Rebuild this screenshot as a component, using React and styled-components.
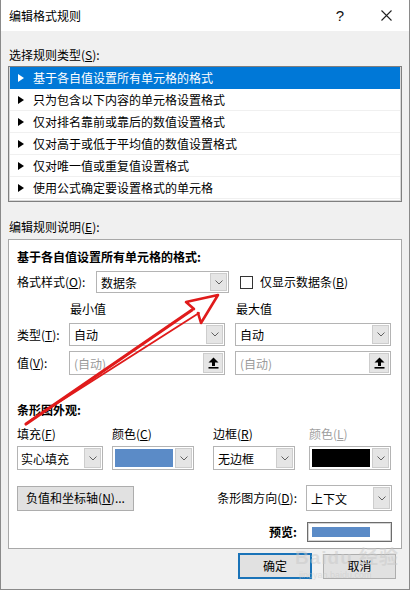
import React from 'react'
import styled, { createGlobalStyle } from 'styled-components'

const GlobalStyle = createGlobalStyle`
  html, body { margin: 0; padding: 0; background: #fff; }
  body {
    font-family: "Noto Sans CJK SC", "Noto Sans", sans-serif;
    font-size: 12px;
    color: #000;
  }
  * { box-sizing: border-box; }
`

const Window = styled.div`
  position: relative;
  width: 410px;
  height: 590px;
  background: #f0f0f0;
  border: 1px solid #8a8a8a;
  border-top: none;
  display: flex;
  flex-direction: column;
  overflow: hidden;
`

const TitleBar = styled.div`
  height: 31px;
  flex-shrink: 0;
  background: #fff;
  display: flex;
  align-items: center;
  padding-left: 8px;
  line-height: 16px;
`

const Title = styled.div`
  flex: 1;
`

const TitleBtn = styled.div`
  width: ${p => p.$w}px;
  height: 31px;
  display: flex;
  align-items: center;
  justify-content: center;
  font-size: 15px;
  color: #111;
  font-family: "Liberation Sans", sans-serif;
`

const Body = styled.div`
  padding: 0 7px;
  display: flex;
  flex-direction: column;
`

const SectionLabel = styled.div`
  height: 16px;
  line-height: 16px;
  margin-top: ${p => p.$mt}px;
  padding-left: 1px;
`

const U = styled.span`
  text-decoration: underline;
  text-underline-offset: 1px;
`

const RuleList = styled.div`
  margin-top: 3px;
  height: 136px;
  background: #fff;
  border: 1px solid #7f7f7f;
  box-shadow: inset 0 0 0 1px #d8d8d8;
  padding: 0 1px;
`

const RuleItem = styled.div`
  height: 22px;
  display: flex;
  align-items: center;
  gap: 9px;
  padding-left: 8px;
  background: ${p => (p.$active ? '#0078d7' : '#fff')};
  color: ${p => (p.$active ? '#fff' : '#000')};
  border-bottom: 1px solid ${p => (p.$active ? '#0078d7' : '#f0f0f0')};
`

const Panel = styled.div`
  margin-top: 4px;
  height: 310px;
  background: #fff;
  border: 1px solid #a8a8a8;
  padding: 9px 9px 0 8px;
  display: flex;
  flex-direction: column;
`

const Heading = styled.div`
  height: 16px;
  line-height: 16px;
  font-weight: bold;
  margin-top: ${p => p.$mt || 0}px;
`

const FormatRow = styled.div`
  margin-top: 6px;
  height: 22px;
  display: flex;
  align-items: center;
`

const RowLabel = styled.div`
  width: ${p => (p.$w ? `${p.$w}px` : 'auto')};
  line-height: 16px;
  white-space: nowrap;
  color: ${p => (p.$disabled ? '#a0a0a0' : '#000')};
`

const Select = styled.div`
  width: ${p => p.$w}px;
  height: ${p => p.$h}px;
  flex-shrink: 0;
  display: flex;
  background: #fff;
  border: 1px solid #b4b4b4;
  padding: 1px;
`

const SelectText = styled.div`
  flex: 1;
  display: flex;
  align-items: center;
  padding-left: ${p => p.$pl || 3}px;
  color: ${p => (p.$placeholder ? '#9a9a9a' : '#000')};
  white-space: nowrap;
`

const Swatch = styled.div`
  flex: 1;
  margin: 1px 2px 1px 1px;
  background: ${p => p.$color};
`

const ArrowBtn = styled.div`
  width: ${p => p.$w || 17}px;
  background: #e5e5e5;
  border: 1px solid #cdcdcd;
  display: flex;
  align-items: center;
  justify-content: center;
`

const Checkbox = styled.div`
  width: 13px;
  height: 13px;
  border: 1px solid #333;
  background: #fff;
  margin-left: 11px;
  margin-right: 7px;
`

const MinMaxGrid = styled.div`
  margin-top: 8px;
  display: grid;
  grid-template-columns: 42px 156px 156px;
  grid-template-rows: 22px 28px 24px;
  column-gap: 10px;
  align-items: start;
`

const GridLabel = styled.div`
  line-height: 16px;
  white-space: nowrap;
  padding-left: ${p => p.$pl || 0}px;
  margin-top: ${p => p.$mt || 0}px;
`

const AppearanceGrid = styled.div`
  margin-top: 8px;
  display: grid;
  grid-template-columns: 95px 101px 96px 82px;
  grid-template-rows: 16px 24px;
  row-gap: 4px;
`

const ActionRow = styled.div`
  margin-top: 15px;
  height: 26px;
  display: flex;
  align-items: center;
  justify-content: space-between;
`

const PushButton = styled.div`
  width: ${p => p.$w}px;
  height: ${p => p.$h}px;
  background: #e1e1e1;
  border: ${p => (p.$default ? '2px solid #1a73b8' : '1px solid #adadad')};
  display: flex;
  align-items: center;
  justify-content: center;
  line-height: 16px;
`

const RightGroup = styled.div`
  display: flex;
  align-items: center;
  gap: ${p => p.$gap}px;
`

const PreviewRow = styled.div`
  margin-top: 11px;
  height: 20px;
  display: flex;
  justify-content: flex-end;
  align-items: center;
  gap: 10px;
`

const PreviewBox = styled.div`
  width: 85px;
  height: 20px;
  border: 1px solid #6d6d6d;
  box-shadow: inset 0 0 0 1px #d4d4d4;
  padding: 4px 4px;
  display: flex;
`

const PreviewBar = styled.div`
  width: 58px;
  background: #5b8bc7;
`

const Footer = styled.div`
  margin-top: 4px;
  display: flex;
  justify-content: flex-end;
  align-items: center;
  gap: 11px;
  padding-right: 6px;
`

const Overlay = styled.svg`
  position: absolute;
  left: 0;
  top: 0;
  pointer-events: none;
`

const Watermark = styled.div`
  position: absolute;
  left: 294px;
  top: 548px;
  color: rgba(200, 200, 200, 0.5);
  font-family: "Liberation Sans", "Noto Sans CJK SC", sans-serif;
  line-height: 1;
  pointer-events: none;
`

const WmBig = styled.div`
  font-size: 19px;
  font-weight: bold;
  letter-spacing: 1px;
`

const WmSmall = styled.div`
  font-size: 9px;
  margin-top: 4px;
  padding-left: 4px;
`

const Chevron = () => (
  <svg width="8" height="5" viewBox="0 0 8 5">
    <polyline points="0.5,0.5 4,4 7.5,0.5" fill="none" stroke="#606060" strokeWidth="1" />
  </svg>
)

const UploadIcon = () => (
  <svg width="11" height="12" viewBox="0 0 11 12">
    <polygon points="5.5,0.5 10.5,5.5 0.5,5.5" fill="#000" />
    <rect x="4" y="5" width="3" height="4" fill="#000" />
    <rect x="0.5" y="10" width="10" height="1.6" fill="#000" />
  </svg>
)

const Triangle = ({ color }) => (
  <svg width="6" height="8" viewBox="0 0 6 8">
    <polygon points="0,0 6,4 0,8" fill={color} />
  </svg>
)

const Dropdown = ({ w, h, text, placeholder, pl }) => (
  <Select $w={w} $h={h}>
    <SelectText $placeholder={placeholder} $pl={pl}>{text}</SelectText>
    <ArrowBtn><Chevron /></ArrowBtn>
  </Select>
)

const ColorDropdown = ({ w, color }) => (
  <Select $w={w} $h={24}>
    <Swatch $color={color} />
    <ArrowBtn><Chevron /></ArrowBtn>
  </Select>
)

const ValueInput = () => (
  <Select $w={156} $h={24}>
    <SelectText $placeholder>(自动)</SelectText>
    <ArrowBtn $w={20}><UploadIcon /></ArrowBtn>
  </Select>
)

const rules = [
  '基于各自值设置所有单元格的格式',
  '只为包含以下内容的单元格设置格式',
  '仅对排名靠前或靠后的数值设置格式',
  '仅对高于或低于平均值的数值设置格式',
  '仅对唯一值或重复值设置格式',
  '使用公式确定要设置格式的单元格',
]

export default function App() {
  return (
    <>
      <GlobalStyle />
      <Window>
        <TitleBar>
          <Title>编辑格式规则</Title>
          <TitleBtn $w={46}>?</TitleBtn>
          <TitleBtn $w={46}>
            <svg width="11" height="11" viewBox="0 0 11 11">
              <path d="M0.5 0.5 L10.5 10.5 M10.5 0.5 L0.5 10.5" stroke="#222" strokeWidth="1.1" />
            </svg>
          </TitleBtn>
        </TitleBar>

        <Body>
          <SectionLabel $mt={16}>选择规则类型(<U>S</U>):</SectionLabel>
          <RuleList>
            {rules.map((r, i) => (
              <RuleItem key={r} $active={i === 0}>
                <Triangle color={i === 0 ? '#fff' : '#000'} />
                <span>{r}</span>
              </RuleItem>
            ))}
          </RuleList>

          <SectionLabel $mt={17}>编辑规则说明(<U>E</U>):</SectionLabel>
          <Panel>
            <Heading>基于各自值设置所有单元格的格式:</Heading>
            <FormatRow>
              <RowLabel $w={79}>格式样式(<U>O</U>):</RowLabel>
              <Dropdown w={133} h={22} text="数据条" />
              <Checkbox />
              <RowLabel>仅显示数据条(<U>B</U>)</RowLabel>
            </FormatRow>

            <MinMaxGrid>
              <div />
              <GridLabel $pl={1}>最小值</GridLabel>
              <GridLabel $pl={1}>最大值</GridLabel>

              <GridLabel $mt={4}>类型(<U>T</U>):</GridLabel>
              <Dropdown w={156} h={23} text="自动" />
              <Dropdown w={156} h={23} text="自动" />

              <GridLabel $mt={4}>值(<U>V</U>):</GridLabel>
              <ValueInput />
              <ValueInput />
            </MinMaxGrid>

            <Heading $mt={27}>条形图外观:</Heading>
            <AppearanceGrid>
              <RowLabel>填充(<U>F</U>)</RowLabel>
              <RowLabel>颜色(<U>C</U>)</RowLabel>
              <RowLabel>边框(<U>R</U>)</RowLabel>
              <RowLabel $disabled>颜色(<U>L</U>)</RowLabel>

              <Dropdown w={86} h={24} text="实心填充" pl={2} />
              <ColorDropdown w={82} color="#5b8bc7" />
              <Dropdown w={82} h={24} text="无边框" />
              <ColorDropdown w={82} color="#000" />
            </AppearanceGrid>

            <ActionRow>
              <PushButton $w={117} $h={25}>负值和坐标轴(<U>N</U>)...</PushButton>
              <RightGroup $gap={9}>
                <RowLabel>条形图方向(<U>D</U>):</RowLabel>
                <Dropdown w={86} h={26} text="上下文" />
              </RightGroup>
            </ActionRow>

            <PreviewRow>
              <Heading>预览:</Heading>
              <PreviewBox>
                <PreviewBar />
              </PreviewBox>
            </PreviewRow>
          </Panel>

          <Footer>
            <PushButton $w={74} $h={26} $default>确定</PushButton>
            <PushButton $w={73} $h={25}>取消</PushButton>
          </Footer>
        </Body>

        <Watermark>
          <WmBig>Baidu 经验</WmBig>
          <WmSmall>jingyan.baidu.com</WmSmall>
        </Watermark>

        <Overlay width="410" height="590" viewBox="0 0 410 590">
          <g fill="none" stroke="#e01b1b" strokeLinejoin="round" strokeLinecap="round">
            <path d="M25 424 L191 310" strokeWidth="3.2" />
            <path d="M30 420 L198 313" strokeWidth="1.8" />
            <path d="M193 309 L185 302 L217 295 L200 323 L197 313" strokeWidth="2.6" />
          </g>
        </Overlay>
      </Window>
    </>
  )
}
